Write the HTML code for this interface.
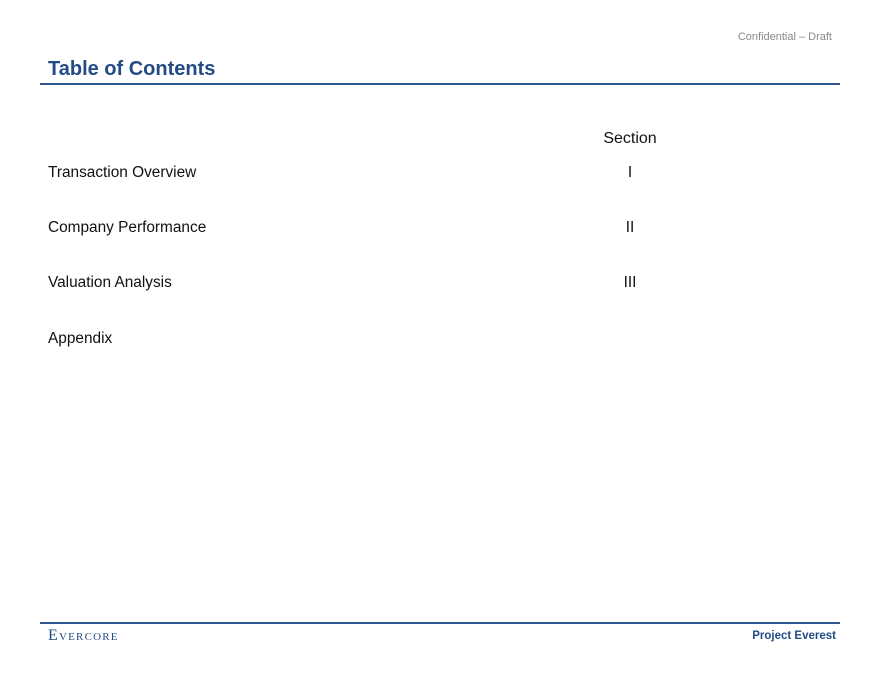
<!DOCTYPE html>
<html><head><style>
body{margin:0;width:880px;height:680px;background:#fff;position:relative;font-family:"Liberation Sans",Arial,sans-serif;overflow:hidden}
.a{position:absolute;white-space:nowrap;line-height:1}
.r{font-size:15.4px;color:#111}
.c{position:absolute;width:80px;text-align:center;left:590px;font-size:15.4px;line-height:1;color:#111}
</style></head><body>
<div class="a" style="right:48px;top:32px;font-size:11px;color:#8a8a8a">Confidential – Draft</div>
<div class="a" style="left:48px;top:59px;font-size:20px;font-weight:bold;color:#234b85">Table of Contents</div>
<div style="position:absolute;left:40px;top:83px;width:800px;height:2px;background:#2d5591"></div>
<div class="c" style="top:131px;font-size:16px">Section</div>
<div class="a r" style="left:48px;top:165px">Transaction Overview</div><div class="c" style="top:165px">I</div>
<div class="a r" style="left:48px;top:220px">Company Performance</div><div class="c" style="top:220px">II</div>
<div class="a r" style="left:48px;top:275px">Valuation Analysis</div><div class="c" style="top:275px">III</div>
<div class="a r" style="left:48px;top:331px">Appendix</div>
<div style="position:absolute;left:40px;top:622px;width:800px;height:2px;background:#2d5591"></div>
<div class="a" style="left:48px;top:628px;font-family:'Liberation Serif',serif;font-size:16px;color:#234b85;font-variant:small-caps;letter-spacing:1.2px">Evercore</div>
<div class="a" style="right:44px;top:631px;font-size:11.5px;font-weight:bold;color:#234b85">Project Everest</div>
</body></html>
